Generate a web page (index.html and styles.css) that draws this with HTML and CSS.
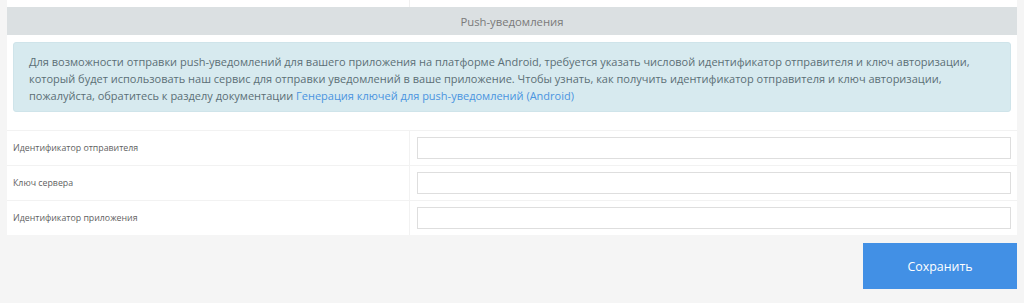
FILE: index.html
```html
<!DOCTYPE html>
<html lang="ru">
<head>
<meta charset="utf-8">
<title>Push-уведомления</title>
<link rel="stylesheet" href="styles.css">
</head>
<body>
<div class="panel">
  <div class="prev-row"><div class="cell-l"></div><div class="cell-r"></div></div>
  <div class="section-head">Push-уведомления</div>
  <div class="alert">Для возможности отправки push-уведомлений для вашего приложения на платформе Android, требуется указать числовой идентификатор отправителя и ключ авторизации, который будет использовать наш сервис для отправки уведомлений в ваше приложение. Чтобы узнать, как получить идентификатор отправителя и ключ авторизации, пожалуйста, обратитесь к разделу документации <a href="#" class="link">Генерация ключей для push-уведомлений (Android)</a></div>
  <div class="form-rows">
    <div class="row"><div class="label">Идентификатор отправителя</div><div class="field"><input class="input" type="text"></div></div>
    <div class="row"><div class="label">Ключ сервера</div><div class="field"><input class="input" type="text"></div></div>
    <div class="row"><div class="label">Идентификатор приложения</div><div class="field"><input class="input" type="text"></div></div>
  </div>
</div>
<div class="actions">
  <button class="save" type="button">Сохранить</button>
</div>
</body>
</html>
```

FILE: styles.css
```css
* { box-sizing: border-box; }
html, body { margin: 0; padding: 0; }
body {
  background: #f5f5f5;
  font-family: "Open Sans", "Noto Sans", sans-serif;
  color: #666;
  width: 1024px;
  height: 303px;
  overflow: hidden;
}
.panel {
  margin-left: 7px;
  width: 1010px;
  background: #fff;
}
.prev-row {
  display: grid;
  grid-template-columns: 403px 1fr;
  height: 7px;
}
.prev-row .cell-l { border-right: 1px solid #f0f0f0; }
.section-head {
  height: 28px;
  line-height: 29px;
  background: #dbe0e2;
  text-align: center;
  font-size: 11.3px;
  color: #7a7a7a;
}
.alert {
  margin: 7px 6px 0 6px;
  padding: 10px 15px 7px 15px;
  background: #d7eaef;
  border: 1px solid #cfe4ea;
  border-radius: 3px;
  font-size: 11px;
  line-height: 17px;
  color: #5b6f76;
}
.link { color: #4a94e0; text-decoration: none; }
.form-rows { margin-top: 18px; }
.row {
  display: grid;
  grid-template-columns: 403px 1fr;
  border-top: 1px solid #f2f2f2;
}
.label {
  border-right: 1px solid #f2f2f2;
  padding-left: 6px;
  display: flex;
  align-items: center;
  font-size: 8.8px;
  color: #5f5f5f;
}
.field { padding: 6px 6px 6px 7px; }
.input {
  display: block;
  width: 100%;
  height: 22px;
  border: 1px solid #dedede;
  background: #fff;
  margin: 0;
  padding: 0 6px;
  outline: none;
}
.actions {
  margin-left: 7px;
  width: 1010px;
  display: flex;
  justify-content: flex-end;
  padding-top: 8px;
}
.save {
  width: 154px;
  height: 46px;
  border: 0;
  background: #4290e5;
  color: #fff;
  font-family: "Open Sans", "Noto Sans", sans-serif;
  font-size: 12.4px;
  cursor: pointer;
}
```
